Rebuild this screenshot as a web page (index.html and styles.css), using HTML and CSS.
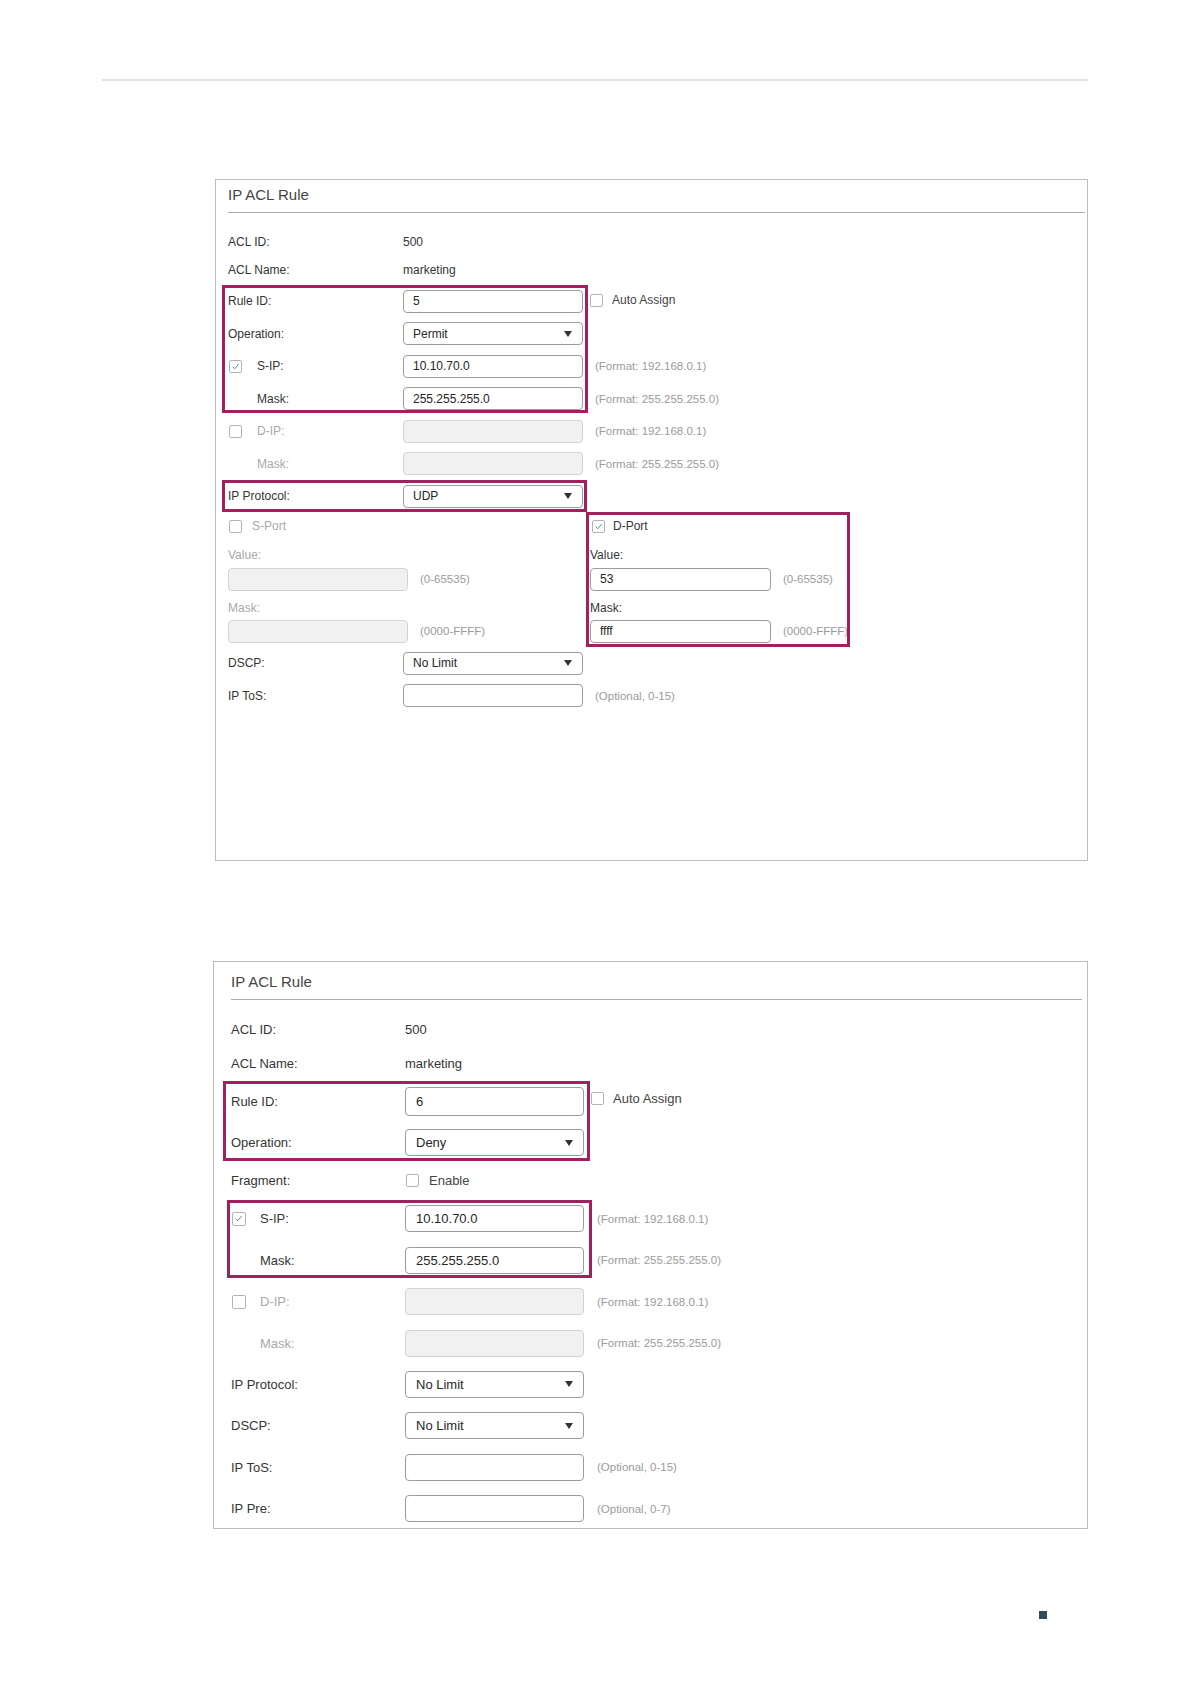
FILE: index.html
```html
<!DOCTYPE html>
<html>
<head>
<meta charset="utf-8">
<title>IP ACL Rule</title>
<link rel="stylesheet" href="styles.css">
</head>
<body>
<div class="page">
  <div class="topline"></div>

  <!-- Panel 1 -->
  <section class="panel p1">
    <div class="title">IP ACL Rule</div>
    <div class="row r-info first"><div class="lbl">ACL ID:</div><div class="val">500</div></div>
    <div class="row r-info"><div class="lbl">ACL Name:</div><div class="val">marketing</div></div>

    <div class="row r-in gap1"><div class="lbl">Rule ID:</div><div class="field">5</div>
      <div class="auto"><span class="cb"></span><span>Auto Assign</span></div></div>
    <div class="row r-in"><div class="lbl">Operation:</div><div class="field sel"><span>Permit</span><span class="arrow"></span></div></div>
    <div class="row r-in"><div class="lbl"><span class="cb on"><svg viewBox="0 0 13 13"><path d="M3 6.6 5.6 9.2 10.2 3.6"/></svg></span><span class="tx">S-IP:</span></div><div class="field">10.10.70.0</div><div class="hint">(Format: 192.168.0.1)</div></div>
    <div class="row r-in"><div class="lbl ind">Mask:</div><div class="field">255.255.255.0</div><div class="hint">(Format: 255.255.255.0)</div></div>
    <div class="row r-in dis"><div class="lbl"><span class="cb"></span><span class="tx">D-IP:</span></div><div class="field off"></div><div class="hint">(Format: 192.168.0.1)</div></div>
    <div class="row r-in dis"><div class="lbl ind">Mask:</div><div class="field off"></div><div class="hint">(Format: 255.255.255.0)</div></div>
    <div class="row r-in"><div class="lbl">IP Protocol:</div><div class="field sel"><span>UDP</span><span class="arrow"></span></div></div>

    <div class="ports">
      <div class="port dis">
        <div class="port-head"><span class="cb"></span><span class="ptx">S-Port</span></div>
        <div class="port-lbl">Value:</div>
        <div class="port-row"><div class="field off"></div><div class="hint">(0-65535)</div></div>
        <div class="port-lbl">Mask:</div>
        <div class="port-row m"><div class="field off"></div><div class="hint">(0000-FFFF)</div></div>
      </div>
      <div class="port dport">
        <div class="port-head"><span class="cb on"><svg viewBox="0 0 13 13"><path d="M3 6.6 5.6 9.2 10.2 3.6"/></svg></span><span class="ptx">D-Port</span></div>
        <div class="port-lbl">Value:</div>
        <div class="port-row"><div class="field">53</div><div class="hint">(0-65535)</div></div>
        <div class="port-lbl">Mask:</div>
        <div class="port-row m"><div class="field">ffff</div><div class="hint">(0000-FFFF)</div></div>
      </div>
    </div>

    <div class="row r-in after-ports"><div class="lbl">DSCP:</div><div class="field sel"><span>No Limit</span><span class="arrow"></span></div></div>
    <div class="row r-in"><div class="lbl">IP ToS:</div><div class="field"></div><div class="hint">(Optional, 0-15)</div></div>

    <div class="mark" style="left:6px;top:105px;width:366px;height:128px"></div>
    <div class="mark" style="left:6px;top:300px;width:365px;height:32px"></div>
    <div class="mark" style="left:370px;top:332px;width:264px;height:135px"></div>
  </section>

  <!-- Panel 2 -->
  <section class="panel p2">
    <div class="title">IP ACL Rule</div>
    <div class="row r-info first"><div class="lbl">ACL ID:</div><div class="val">500</div></div>
    <div class="row r-info"><div class="lbl">ACL Name:</div><div class="val">marketing</div></div>

    <div class="row h43"><div class="lbl">Rule ID:</div><div class="field tall">6</div>
      <div class="auto"><span class="cb"></span><span>Auto Assign</span></div></div>
    <div class="row h39"><div class="lbl">Operation:</div><div class="field sel"><span>Deny</span><span class="arrow"></span></div></div>
    <div class="row h36"><div class="lbl">Fragment:</div><div class="enable"><span class="cb"></span><span>Enable</span></div></div>
    <div class="row h41"><div class="lbl"><span class="cb on"><svg viewBox="0 0 13 13"><path d="M3 6.6 5.6 9.2 10.2 3.6"/></svg></span><span class="tx">S-IP:</span></div><div class="field">10.10.70.0</div><div class="hint">(Format: 192.168.0.1)</div></div>
    <div class="row h42"><div class="lbl ind">Mask:</div><div class="field">255.255.255.0</div><div class="hint">(Format: 255.255.255.0)</div></div>
    <div class="row r-in dis"><div class="lbl"><span class="cb"></span><span class="tx">D-IP:</span></div><div class="field off"></div><div class="hint">(Format: 192.168.0.1)</div></div>
    <div class="row r-in dis"><div class="lbl ind">Mask:</div><div class="field off"></div><div class="hint">(Format: 255.255.255.0)</div></div>
    <div class="row r-in"><div class="lbl">IP Protocol:</div><div class="field sel"><span>No Limit</span><span class="arrow"></span></div></div>
    <div class="row r-in"><div class="lbl">DSCP:</div><div class="field sel"><span>No Limit</span><span class="arrow"></span></div></div>
    <div class="row r-in"><div class="lbl">IP ToS:</div><div class="field"></div><div class="hint">(Optional, 0-15)</div></div>
    <div class="row r-in"><div class="lbl">IP Pre:</div><div class="field"></div><div class="hint">(Optional, 0-7)</div></div>

    <div class="mark" style="left:9px;top:119px;width:367px;height:80px"></div>
    <div class="mark" style="left:13px;top:238px;width:365px;height:78px"></div>
  </section>

  <div class="pagemark"></div>
</div>
</body>
</html>
```

FILE: styles.css
```css
html, body {
  margin: 0;
  padding: 0;
  background: #ffffff;
}

.page {
  position: relative;
  width: 1191px;
  min-height: 1684px;
  padding-top: 79px;
  box-sizing: border-box;
  font-family: "Liberation Sans", Arial, sans-serif;
  color: #353535;
}

.topline {
  margin-left: 102px;
  width: 986px;
  height: 2px;
  background: #e2e2e2;
}

.panel {
  position: relative;
  box-sizing: border-box;
  border: 1px solid #bcbcbc;
  background: #ffffff;
}

.title {
  color: #454545;
  border-bottom: 1px solid #a9a9a9;
  font-size: 15px;
  line-height: 20px;
}

.row {
  display: flex;
  align-items: center;
}

.lbl {
  flex: none;
  box-sizing: border-box;
  display: flex;
  align-items: center;
  white-space: nowrap;
}

.lbl.ind {
  padding-left: 29px;
}

.lbl .tx {
  margin-left: 15px;
}

.val {
  white-space: nowrap;
}

.field {
  flex: none;
  box-sizing: border-box;
  border: 1px solid #9c9c9c;
  border-radius: 4px;
  background: #ffffff;
  display: flex;
  align-items: center;
  justify-content: space-between;
  padding-left: 9px;
  padding-right: 10px;
  color: #262626;
  white-space: nowrap;
}

.field.off {
  background: #f1f1f1;
  border-color: #d3d3d3;
}

.arrow {
  width: 0;
  height: 0;
  border-left: 4px solid transparent;
  border-right: 4px solid transparent;
  border-top: 6px solid #333333;
}

.hint {
  color: #9b9b9b;
  font-size: 11.5px;
  white-space: nowrap;
}

.dis .lbl,
.dis .port-lbl,
.dis .ptx {
  color: #a9a9a9;
}

.cb {
  flex: none;
  box-sizing: border-box;
  width: 13px;
  height: 13px;
  border: 1px solid #b3b3b3;
  border-radius: 2px;
  background: #ffffff;
  display: inline-flex;
  margin-left: 1px;
}

.cb svg {
  width: 11px;
  height: 11px;
}

.cb svg path {
  fill: none;
  stroke: #3f9c8c;
  stroke-width: 1.1;
}

.auto {
  display: flex;
  align-items: center;
  align-self: flex-start;
  margin-left: 6px;
  color: #444444;
  white-space: nowrap;
}

.auto .cb {
  margin-right: 9px;
}

.mark {
  position: absolute;
  box-sizing: border-box;
  border: 3px solid #a3205f;
  pointer-events: none;
}

/* ---------- Panel 1 ---------- */
.p1 {
  margin-top: 98px;
  margin-left: 215px;
  width: 873px;
  height: 682px;
  padding: 0 2px 0 12px;
  font-size: 12px;
}

.p1 .title {
  padding-top: 5px;
  padding-bottom: 7px;
}

.p1 .r-info {
  height: 28px;
}

.p1 .r-info.first {
  margin-top: 15px;
}

.p1 .gap1 {
  margin-top: 1px;
}

.p1 .r-in {
  height: 32.5px;
}

.p1 .lbl {
  width: 175px;
}

.p1 .field {
  width: 180px;
  height: 23px;
}

.p1 .hint {
  margin-left: 12px;
}

.p1 .auto {
  margin-top: 8px;
}

.ports {
  display: grid;
  grid-template-columns: 362px 1fr;
}

.port-head {
  height: 27px;
  display: flex;
  align-items: center;
}

.port-head .ptx {
  margin-left: 10px;
}

.dport .port-head .cb {
  margin-left: 2px;
}

.dport .port-head .ptx {
  margin-left: 8px;
}

.port-lbl {
  margin-top: 6px;
  height: 18px;
  line-height: 18px;
}

.port-row {
  display: flex;
  align-items: center;
  margin-top: 4px;
}

.port-row.m {
  margin-top: 3px;
}

.port-row + .port-lbl {
  margin-top: 8px;
}

.dport .field {
  width: 181px;
}

.p1 .port .hint {
  margin-left: 12px;
}

.p1 .after-ports {
  margin-top: 4.5px;
}

/* ---------- Panel 2 ---------- */
.p2 {
  margin-top: 100px;
  margin-left: 213px;
  width: 875px;
  height: 568px;
  padding: 0 5px 0 17px;
  font-size: 13px;
}

.p2 .title {
  padding-top: 10px;
  padding-bottom: 7px;
}

.p2 .r-info {
  height: 34px;
}

.p2 .r-info.first {
  margin-top: 12px;
}

.p2 .lbl {
  width: 174px;
}

.p2 .field {
  width: 179px;
  height: 27px;
  padding-left: 10px;
}

.p2 .field.tall {
  height: 29px;
}

.p2 .hint {
  margin-left: 13px;
}

.p2 .lbl .cb {
  width: 14px;
  height: 14px;
}

.p2 .lbl .tx {
  margin-left: 14px;
}

.p2 .auto {
  margin-left: 7px;
  margin-top: 11px;
}

.p2 .auto .cb {
  margin-left: 0;
  margin-right: 9px;
}

.enable {
  display: flex;
  align-items: center;
  color: #444444;
}

.enable .cb {
  margin-right: 10px;
}

.h43 { height: 43px; }
.h39 { height: 39px; }
.h36 { height: 36px; }
.h41 { height: 41px; }
.h42 { height: 42px; }

.p2 .r-in {
  height: 41.4px;
}

.pagemark {
  margin-top: 82px;
  margin-left: 1039px;
  width: 8px;
  height: 8px;
  background: #2f4e5a;
}
```
